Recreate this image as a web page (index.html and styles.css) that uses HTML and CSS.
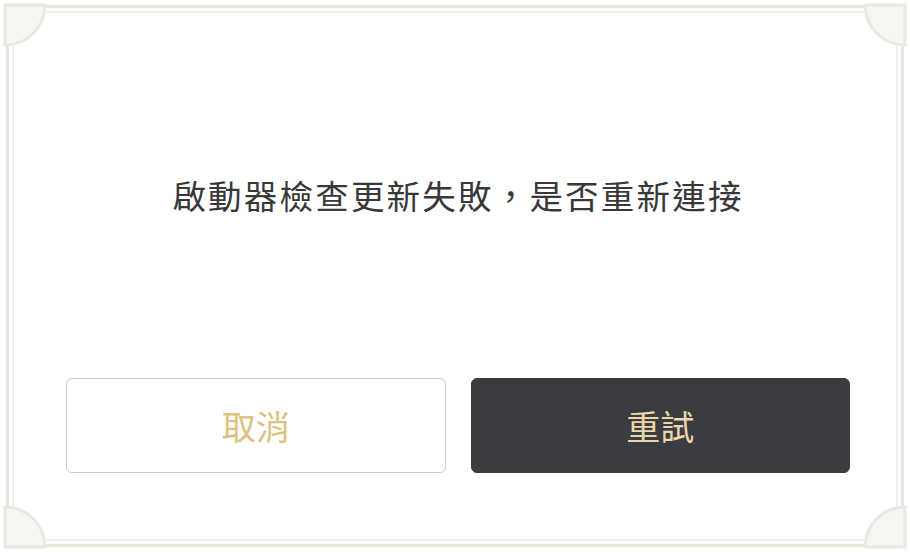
FILE: index.html
```html
<!DOCTYPE html>
<html lang="zh-Hant">
<head>
<meta charset="utf-8">
<title>更新失敗</title>
<link rel="stylesheet" href="styles.css">
</head>
<body>
<div class="dialog">
  <svg class="frame" viewBox="0 0 910 552" preserveAspectRatio="none" aria-hidden="true">
    <g fill="#f6f5f2" stroke="#eae8e2" stroke-width="3">
      <path d="M5 5 L45 5 A40 40 0 0 1 5 45 Z"/>
      <path d="M905 5 L865 5 A40 40 0 0 0 905 45 Z"/>
      <path d="M5 547 L45 547 A40 40 0 0 0 5 507 Z"/>
      <path d="M905 547 L865 547 A40 40 0 0 1 905 507 Z"/>
    </g>
    <g stroke="#e8e6e0" stroke-width="3" fill="none">
      <line x1="45" y1="6.5" x2="865" y2="6.5"/>
      <line x1="45" y1="545.5" x2="865" y2="545.5"/>
      <line x1="7.5" y1="45" x2="7.5" y2="507"/>
      <line x1="902.5" y1="45" x2="902.5" y2="507"/>
    </g>
    <g stroke="#efeee9" stroke-width="2" fill="none">
      <line x1="45" y1="12" x2="865" y2="12"/>
      <line x1="45" y1="540" x2="865" y2="540"/>
      <line x1="13" y1="45" x2="13" y2="507"/>
      <line x1="897" y1="45" x2="897" y2="507"/>
    </g>
  </svg>
  <div class="message">啟動器檢查更新失敗，是否重新連接</div>
  <div class="actions">
    <button class="btn btn-cancel" type="button">取消</button>
    <button class="btn btn-retry" type="button">重試</button>
  </div>
</div>
</body>
</html>
```

FILE: styles.css
```css
html, body {
  margin: 0;
  padding: 0;
  background: #ffffff;
}

.dialog {
  position: relative;
  width: 910px;
  height: 552px;
  box-sizing: border-box;
  display: flex;
  flex-direction: column;
  font-family: "Noto Sans CJK TC", "Noto Sans", sans-serif;
}

.frame {
  position: absolute;
  inset: 0;
  width: 100%;
  height: 100%;
  pointer-events: none;
}

.message {
  height: 378px;
  box-sizing: border-box;
  padding-top: 170px;
  text-align: center;
  font-size: 33.5px;
  letter-spacing: 2.2px;
  line-height: 50px;
  color: #383838;
  padding-left: 6px;
}

.actions {
  display: flex;
  gap: 25px;
  padding: 0 60px 0 66px;
}

.btn {
  flex: 1;
  height: 95px;
  border-radius: 6px;
  font-family: "Noto Sans CJK TC", "Noto Sans", sans-serif;
  font-size: 34px;
  padding: 0;
  cursor: pointer;
}

.btn-cancel {
  background: #ffffff;
  border: 1px solid #cbcbcb;
  color: #dcc27f;
}

.btn-retry {
  background: #3b3c41;
  border: 1px solid #3b3c41;
  color: #ecd6aa;
}
```
